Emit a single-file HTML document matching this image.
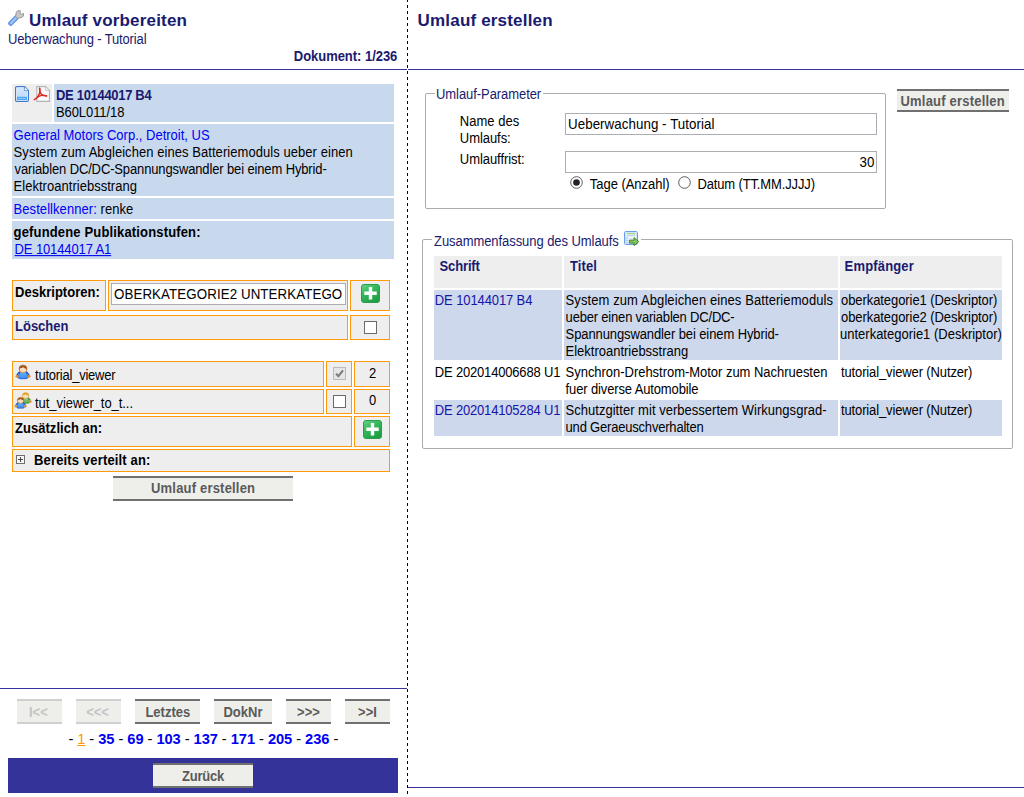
<!DOCTYPE html>
<html><head><meta charset="utf-8"><title>Umlauf</title>
<style>
*{box-sizing:border-box}
html,body{margin:0;padding:0;background:#fff}
body{width:1024px;height:797px;position:relative;overflow:hidden;font-family:"Liberation Sans",sans-serif;font-size:13px;line-height:17px;color:#000}
div,svg{position:absolute}
.t{white-space:nowrap;transform:scaleY(1.075);transform-origin:0 13px}
.b{font-weight:bold}
.navy{color:#1a1a6e}
.blue{color:#0000f5}
.lb{background:#c9d9ed}
.gr{background:#eeeeee}
.oc{background:#eeeeee;border:1px solid #ff9a0c}
.hl{height:1px;background:#333399}
.btn{background:#eeeeea;border-top:2px solid #707070;border-bottom:2px solid #707070}
.btn.dis{border-color:#d0d0d0}
.bt{color:#5a5a5a;font-weight:bold}
.bt.dis{color:#c4c4c4}
.cb{width:13px;height:13px;border:1px solid #6a6a6a;background:#fff}
.inp{border:1px solid #abadb3;background:#fff}
.fs{border:1px solid #ababab;border-radius:2px}
.leg{background:#fff}
.sb{background:#cdd8ec}
</style></head><body>

<div style="left:407px;top:0;width:1px;height:797px;background:linear-gradient(#000 50%,rgba(0,0,0,0) 50%) 0 -1px/1px 6px repeat-y"></div>
<svg style="left:8px;top:10px" width="16" height="16" viewBox="0 0 16 16"><path d="M2.7 13.3 L8 8" stroke="#5f93e2" stroke-width="5" stroke-linecap="round"/><path d="M2.9 13.1 L7.8 8.2" stroke="#9cc0f1" stroke-width="2.6" stroke-linecap="round"/><path d="M7.6 6.4 L8.3 2.2 Q9 0.4 11.6 0.4 L12.4 0.8 L11.9 3.2 L13.4 4.3 L15.7 3.4 Q16.2 6.2 13.8 7.6 L10.4 8 L9.6 8.9 Z" fill="#c8c8c8" stroke="#8e8e8e" stroke-width="0.9" stroke-linejoin="round"/></svg>
<div id="t0" class="t b navy" style="left:29.00px;top:11.0px;font-size:17px;line-height:20px;transform-origin:0 16px;transform:scaleY(1.0);letter-spacing:0.176px;">Umlauf vorbereiten</div>
<div id="t1" class="t navy" style="left:8.00px;top:31.0px;letter-spacing:-0.141px;">Ueberwachung - Tutorial</div>
<div id="t2" class="t b navy" style="left:293.80px;top:48.0px;letter-spacing:-0.036px;">Dokument: 1/236</div>
<div class="hl" style="left:0px;top:69px;width:407px;height:1px;"></div>
<div class="gr" style="left:12px;top:84px;width:40px;height:38px;"></div>
<div class="lb" style="left:54px;top:84px;width:340px;height:38px;"></div>
<div class="lb" style="left:12px;top:124px;width:382px;height:72px;"></div>
<div class="lb" style="left:12px;top:198px;width:382px;height:21px;"></div>
<div class="lb" style="left:12px;top:221px;width:382px;height:38px;"></div>
<svg style="left:15px;top:86px" width="14" height="16" viewBox="0 0 14 16"><defs><linearGradient id="dg" x1="0" y1="0" x2="0" y2="1"><stop offset="0" stop-color="#d6e7fb"/><stop offset="1" stop-color="#b9d6f8"/></linearGradient></defs><path d="M1.8 0.6 H9.6 L13.4 4.4 V14.2 Q13.4 15.4 12.2 15.4 H1.8 Q0.6 15.4 0.6 14.2 V1.8 Q0.6 0.6 1.8 0.6 Z" fill="#fff" stroke="#3f78cf" stroke-width="1.2"/><path d="M2 2 H9 V5 H12 V14 H2 Z" fill="url(#dg)"/><path d="M9.4 0.8 V4.6 H13.2" fill="#f2f7fe" stroke="#5a8fdc" stroke-width="0.9"/><rect x="2" y="10.8" width="10" height="3.2" fill="#4ba6f6"/><rect x="3" y="12" width="8" height="0.9" fill="#8ccafb"/></svg>
<svg style="left:33px;top:86px" width="18" height="16" viewBox="0 0 18 16"><path d="M3.8 0.6 H12.6 L16.4 4.4 V15.4 H3.8 Z" fill="#fcfcfc" stroke="#b3b3b3" stroke-width="1.1"/><path d="M12.4 0.8 V4.6 H16.2" fill="#efefef" stroke="#c4c4c4" stroke-width="0.8"/><path d="M1.2 13.6 C3.6 12.6 5.8 9.6 6.6 7 C7.2 5 7 3.2 6.6 2.2" fill="none" stroke="#dd2a26" stroke-width="1.5" stroke-linecap="round"/><path d="M6.6 2.4 C6.6 5 7.8 8 9.4 9 C10.6 9.6 12.4 9.8 13.6 9.9" fill="none" stroke="#dd2a26" stroke-width="1.5" stroke-linecap="round"/><path d="M13.6 9.9 C10.6 9 7.4 9.6 5.4 10.6" fill="none" stroke="#dd2a26" stroke-width="1.3" stroke-linecap="round"/></svg>
<div id="t3" class="t b navy" style="left:56.00px;top:87.0px;letter-spacing:-0.315px;">DE 10144017 B4</div>
<div id="t4" class="t " style="left:56.00px;top:104.0px;letter-spacing:-0.089px;">B60L011/18</div>
<div id="t5" class="t blue" style="left:13.60px;top:127.0px;letter-spacing:0.009px;">General Motors Corp., Detroit, US</div>
<div id="t6" class="t " style="left:13.60px;top:144.0px;letter-spacing:0.058px;">System zum Abgleichen eines Batteriemoduls ueber einen</div>
<div id="t7" class="t " style="left:14.60px;top:161.0px;letter-spacing:-0.133px;">variablen DC/DC-Spannungswandler bei einem Hybrid-</div>
<div id="t8" class="t " style="left:13.60px;top:178.0px;letter-spacing:0.025px;">Elektroantriebsstrang</div>
<div id="t9" class="t " style="left:13.60px;top:201.0px;letter-spacing:0.063px;"><span class="blue">Bestellkenner:</span> renke</div>
<div id="t10" class="t b" style="left:13.60px;top:224.0px;letter-spacing:0.156px;">gefundene Publikationstufen:</div>
<div id="t11" class="t blue" style="left:14.60px;top:241.0px;letter-spacing:-0.123px;text-decoration:underline;">DE 10144017 A1</div>
<div class="oc" style="left:12px;top:280px;width:94px;height:31px;"></div>
<div class="oc" style="left:108px;top:280px;width:240px;height:31px;"></div>
<div class="oc" style="left:350px;top:280px;width:40px;height:31px;"></div>
<div class="oc" style="left:12px;top:315px;width:336px;height:25px;"></div>
<div class="oc" style="left:350px;top:315px;width:40px;height:25px;"></div>
<div id="t12" class="t b" style="left:15.00px;top:284.0px;letter-spacing:0.021px;">Deskriptoren:</div>
<div class="inp" style="left:111px;top:283px;width:235px;height:22px;"></div>
<div id="t13" class="t " style="left:114.00px;top:286.0px;font-size:13.33px;transform:scaleY(1.05);letter-spacing:0.084px;">OBERKATEGORIE2 UNTERKATEGO</div>
<svg style="left:361px;top:284px" width="19" height="19" viewBox="0 0 19 19"><defs><linearGradient id="g1" x1="0" y1="0" x2="0.6" y2="1"><stop offset="0" stop-color="#6ad488"/><stop offset="0.45" stop-color="#36b85d"/><stop offset="1" stop-color="#1f9f46"/></linearGradient></defs><rect x="0.5" y="0.5" width="18" height="18" rx="2.5" fill="url(#g1)" stroke="#2a9d4c" stroke-width="1"/><path d="M7.8 3 h3.4 v4.5 h4.5 v3.4 h-4.5 v4.5 h-3.4 v-4.5 h-4.5 v-3.4 h4.5 z" fill="#fff"/></svg>
<div id="t14" class="t b navy" style="left:15.00px;top:318.0px;">Löschen</div>
<div class="cb" style="left:364px;top:321px;width:13px;height:13px;"></div>
<div class="oc" style="left:12px;top:361px;width:312px;height:26px;"></div>
<div class="oc" style="left:326px;top:361px;width:26px;height:26px;"></div>
<div class="oc" style="left:354px;top:361px;width:36px;height:26px;"></div>
<div class="oc" style="left:12px;top:389px;width:312px;height:25px;"></div>
<div class="oc" style="left:326px;top:389px;width:26px;height:25px;"></div>
<div class="oc" style="left:354px;top:389px;width:36px;height:25px;"></div>
<div class="oc" style="left:12px;top:416px;width:340px;height:31px;"></div>
<div class="oc" style="left:354px;top:416px;width:36px;height:31px;"></div>
<div class="oc" style="left:12px;top:449px;width:378px;height:23px;"></div>
<svg style="left:15px;top:364px" width="16" height="16" viewBox="0 0 16 16"><defs><linearGradient id="pg1" x1="0" y1="0" x2="0" y2="1"><stop offset="0" stop-color="#5cbaff"/><stop offset="1" stop-color="#3a88f0"/></linearGradient></defs><path d="M4.9 7.5 L1.9 11 M11.1 7.5 L14.1 11" stroke="#2156c6" stroke-width="1.4" fill="none"/><path d="M5.2 8 L10.8 8 L13 12.6 Q13.1 14.7 11 14.7 L5 14.7 Q2.9 14.7 3 12.6 Z" fill="url(#pg1)" stroke="#2156c6" stroke-width="0.8" stroke-linejoin="round"/><circle cx="2" cy="12.3" r="1.5" fill="#e48a2a"/><circle cx="14" cy="12.3" r="1.5" fill="#e48a2a"/><ellipse cx="8" cy="4.9" rx="3.9" ry="3.9" fill="#fbdcc0" stroke="#b8733a" stroke-width="0.7"/><path d="M3.9 5.4 A4.1 4.1 0 0 1 12.1 5.4 L11.5 6 L11.2 4.4 Q9.2 4.6 8.3 3.2 Q6.2 4.4 4.8 4.3 L4.5 6 Z" fill="#a2571c"/></svg>
<svg style="left:14px;top:391px" width="18" height="18" viewBox="0 0 18 18"><g transform="translate(5.2,0.6) scale(0.8)"><defs><linearGradient id="pg2" x1="0" y1="0" x2="0" y2="1"><stop offset="0" stop-color="#8ed27c"/><stop offset="1" stop-color="#55a848"/></linearGradient></defs><path d="M4.9 7.5 L1.9 11 M11.1 7.5 L14.1 11" stroke="#3a8a34" stroke-width="1.4" fill="none"/><path d="M5.2 8 L10.8 8 L13 12.6 Q13.1 14.7 11 14.7 L5 14.7 Q2.9 14.7 3 12.6 Z" fill="url(#pg2)" stroke="#3a8a34" stroke-width="0.8" stroke-linejoin="round"/><circle cx="2" cy="12.3" r="1.5" fill="#e48a2a"/><circle cx="14" cy="12.3" r="1.5" fill="#e48a2a"/><ellipse cx="8" cy="4.9" rx="3.9" ry="3.9" fill="#fbdcc0" stroke="#d9a03a" stroke-width="0.7"/><path d="M3.9 5.4 A4.1 4.1 0 0 1 12.1 5.4 L11.5 6 L11.2 4.4 Q9.2 4.6 8.3 3.2 Q6.2 4.4 4.8 4.3 L4.5 6 Z" fill="#e0a528"/></g><g transform="translate(0.2,5.4) scale(0.8)"><defs><linearGradient id="pg3" x1="0" y1="0" x2="0" y2="1"><stop offset="0" stop-color="#5cbaff"/><stop offset="1" stop-color="#3a88f0"/></linearGradient></defs><path d="M4.9 7.5 L1.9 11 M11.1 7.5 L14.1 11" stroke="#2156c6" stroke-width="1.4" fill="none"/><path d="M5.2 8 L10.8 8 L13 12.6 Q13.1 14.7 11 14.7 L5 14.7 Q2.9 14.7 3 12.6 Z" fill="url(#pg3)" stroke="#2156c6" stroke-width="0.8" stroke-linejoin="round"/><circle cx="2" cy="12.3" r="1.5" fill="#e48a2a"/><circle cx="14" cy="12.3" r="1.5" fill="#e48a2a"/><ellipse cx="8" cy="4.9" rx="3.9" ry="3.9" fill="#fbdcc0" stroke="#b8733a" stroke-width="0.7"/><path d="M3.9 5.4 A4.1 4.1 0 0 1 12.1 5.4 L11.5 6 L11.2 4.4 Q9.2 4.6 8.3 3.2 Q6.2 4.4 4.8 4.3 L4.5 6 Z" fill="#a2571c"/></g></svg>
<div id="t15" class="t " style="left:35.00px;top:367.0px;letter-spacing:-0.232px;">tutorial_viewer</div>
<div id="t16" class="t " style="left:35.00px;top:395.0px;letter-spacing:-0.059px;">tut_viewer_to_t...</div>
<div id="t17" class="t " style="left:369.00px;top:365.0px;">2</div>
<div id="t18" class="t " style="left:369.00px;top:392.0px;">0</div>
<div class="cb" style="left:333px;top:367px;width:13px;height:13px;border-color:#bcbcbc;background:#e5e5e5;"></div>
<svg style="left:335px;top:369px" width="9" height="9" viewBox="0 0 9 9"><path d="M1 4.6 L3.4 7.2 L8 1.4" fill="none" stroke="#7c7c7c" stroke-width="2"/></svg>
<div class="cb" style="left:333px;top:395px;width:13px;height:13px;"></div>
<div id="t19" class="t b" style="left:15.00px;top:420.0px;letter-spacing:0.038px;">Zusätzlich an:</div>
<svg style="left:363px;top:420px" width="19" height="19" viewBox="0 0 19 19"><defs><linearGradient id="g2" x1="0" y1="0" x2="0.6" y2="1"><stop offset="0" stop-color="#6ad488"/><stop offset="0.45" stop-color="#36b85d"/><stop offset="1" stop-color="#1f9f46"/></linearGradient></defs><rect x="0.5" y="0.5" width="18" height="18" rx="2.5" fill="url(#g2)" stroke="#2a9d4c" stroke-width="1"/><path d="M7.8 3 h3.4 v4.5 h4.5 v3.4 h-4.5 v4.5 h-3.4 v-4.5 h-4.5 v-3.4 h4.5 z" fill="#fff"/></svg>
<svg style="left:16px;top:455px" width="9" height="9" viewBox="0 0 9 9"><rect x="0.5" y="0.5" width="8" height="8" fill="#f6f6f6" stroke="#6e6e6e"/><path d="M2 4.5 h5 M4.5 2 v5" stroke="#4a4a4a" stroke-width="1"/></svg>
<div id="t20" class="t b" style="left:34.00px;top:452.0px;letter-spacing:0.158px;">Bereits verteilt an:</div>
<div class="btn" style="left:113px;top:476px;width:180px;height:25px;"></div>
<div id="t21" class="t bt" style="left:151.00px;top:480.0px;letter-spacing:0.193px;">Umlauf erstellen</div>
<div class="hl" style="left:0px;top:688px;width:407px;height:1px;"></div>
<div class="btn dis" style="left:17px;top:699px;width:45px;height:25px;"></div>
<div id="t22" class="t bt dis" style="left:29.00px;top:704.0px;">I&lt;&lt;</div>
<div class="btn dis" style="left:76px;top:699px;width:45px;height:25px;"></div>
<div id="t23" class="t bt dis" style="left:86.20px;top:704.0px;">&lt;&lt;&lt;</div>
<div class="btn" style="left:135px;top:699px;width:65px;height:25px;"></div>
<div id="t24" class="t bt" style="left:145.40px;top:704.0px;">Letztes</div>
<div class="btn" style="left:214px;top:699px;width:58px;height:25px;"></div>
<div class="t bt" style="left:214px;width:58px;text-align:center;top:704px">DokNr</div>
<div class="btn" style="left:286px;top:699px;width:45px;height:25px;"></div>
<div class="t bt" style="left:286px;width:45px;text-align:center;top:704px">&gt;&gt;&gt;</div>
<div class="btn" style="left:345px;top:699px;width:45px;height:25px;"></div>
<div class="t bt" style="left:345px;width:45px;text-align:center;top:704px">&gt;&gt;I</div>
<div id="t25" class="t " style="left:68.40px;top:730.7px;font-size:14.67px;transform-origin:0 13.3px;transform:scaleY(1.03);letter-spacing:-0.055px;">- <span style="color:#ff9a00;text-decoration:underline">1</span> - <b class="blue">35</b> - <b class="blue">69</b> - <b class="blue">103</b> - <b class="blue">137</b> - <b class="blue">171</b> - <b class="blue">205</b> - <b class="blue">236</b> -</div>
<div class="" style="left:8px;top:758px;width:390px;height:35px;background:#333399;"></div>
<div class="btn" style="left:153px;top:763px;width:100px;height:25px;"></div>
<div id="t26" class="t bt" style="left:182.00px;top:768.0px;letter-spacing:-0.200px;">Zurück</div>
<div id="t27" class="t b navy" style="left:417.60px;top:11.0px;font-size:17px;line-height:20px;transform-origin:0 16px;transform:scaleY(1.0);letter-spacing:0.180px;">Umlauf erstellen</div>
<div class="hl" style="left:408px;top:69px;width:616px;height:1px;"></div>
<div class="hl" style="left:408px;top:787px;width:616px;height:1px;"></div>
<div class="fs" style="left:425px;top:93px;width:461px;height:116px;"></div>
<div class="leg" style="left:435px;top:86px;width:108px;height:14px;"></div>
<div id="t28" class="t navy" style="left:436.00px;top:86.0px;letter-spacing:-0.067px;">Umlauf-Parameter</div>
<div id="t29" class="t " style="left:459.80px;top:113.0px;letter-spacing:0.014px;">Name des</div>
<div id="t30" class="t " style="left:459.80px;top:130.0px;letter-spacing:-0.057px;">Umlaufs:</div>
<div id="t31" class="t " style="left:459.80px;top:151.0px;letter-spacing:-0.055px;">Umlauffrist:</div>
<div class="inp" style="left:565px;top:113px;width:312px;height:22px;"></div>
<div id="t32" class="t " style="left:568.00px;top:116.0px;font-size:13.33px;transform:scaleY(1.05);letter-spacing:0.059px;">Ueberwachung - Tutorial</div>
<div class="inp" style="left:565px;top:151px;width:312px;height:22px;"></div>
<div id="t33" class="t " style="left:859.60px;top:154.0px;font-size:13.33px;transform:scaleY(1.05);">30</div>
<svg style="left:570px;top:176px" width="13" height="13" viewBox="0 0 13 13"><circle cx="6.5" cy="6.5" r="5.8" fill="#fff" stroke="#5c5c5c" stroke-width="1"/><circle cx="6.5" cy="6.5" r="3.3" fill="#222"/></svg>
<div id="t34" class="t " style="left:589.80px;top:176.0px;letter-spacing:-0.033px;">Tage (Anzahl)</div>
<svg style="left:678px;top:176px" width="13" height="13" viewBox="0 0 13 13"><circle cx="6.5" cy="6.5" r="5.8" fill="#fff" stroke="#5c5c5c" stroke-width="1"/></svg>
<div id="t35" class="t " style="left:697.40px;top:176.0px;letter-spacing:-0.135px;">Datum (TT.MM.JJJJ)</div>
<div class="btn" style="left:897px;top:89px;width:112px;height:23px;"></div>
<div id="t36" class="t bt" style="left:900.50px;top:93.0px;letter-spacing:0.200px;">Umlauf erstellen</div>
<div class="fs" style="left:422px;top:239px;width:591px;height:210px;"></div>
<div class="leg" style="left:432px;top:230px;width:209px;height:18px;"></div>
<div id="t37" class="t navy" style="left:434.00px;top:233.0px;letter-spacing:-0.062px;">Zusammenfassung des Umlaufs</div>
<svg style="left:624px;top:231px" width="16" height="16" viewBox="0 0 16 16"><rect x="0.5" y="0.5" width="13" height="13" rx="1.2" fill="#fff" stroke="#6b9de2"/><rect x="1.5" y="1.5" width="11" height="11" fill="none" stroke="#d3e3f9"/><path d="M2.5 2.8 H11.5" stroke="#86c873" stroke-width="1.1"/><path d="M2.5 4.8 H11.5" stroke="#a6c5ef" stroke-width="1"/><rect x="2" y="5.6" width="2.2" height="6.6" fill="#b4cef3"/><path d="M4.5 7.6 H11.5 M4.5 9.6 H11.5" stroke="#d3e3f9" stroke-width="1"/><path d="M2.6 6.6 h1 M2.6 8.6 h1 M2.6 10.6 h1" stroke="#fff" stroke-width="1"/><path d="M5.4 9.1 H10 V6.6 L14.8 10.6 L10 14.6 V12.1 H5.4 Z" fill="#84c067" stroke="#3c8d20" stroke-width="1" stroke-linejoin="round"/></svg>
<div class="gr" style="left:434px;top:256px;width:128px;height:32px;"></div>
<div class="gr" style="left:564px;top:256px;width:274px;height:32px;"></div>
<div class="gr" style="left:840px;top:256px;width:162px;height:32px;"></div>
<div class="sb" style="left:434px;top:290px;width:128px;height:70px;"></div>
<div class="sb" style="left:564px;top:290px;width:274px;height:70px;"></div>
<div class="sb" style="left:840px;top:290px;width:162px;height:70px;"></div>
<div class="sb" style="left:434px;top:400px;width:128px;height:36px;"></div>
<div class="sb" style="left:564px;top:400px;width:274px;height:36px;"></div>
<div class="sb" style="left:840px;top:400px;width:162px;height:36px;"></div>
<div id="t38" class="t b navy" style="left:439.60px;top:258.0px;letter-spacing:-0.150px;">Schrift</div>
<div id="t39" class="t b navy" style="left:570.00px;top:258.0px;letter-spacing:0.100px;">Titel</div>
<div id="t40" class="t b navy" style="left:844.60px;top:258.0px;letter-spacing:0.163px;">Empfänger</div>
<div id="t41" class="t " style="left:434.80px;top:292.0px;letter-spacing:-0.108px;color:#1515a8;">DE 10144017 B4</div>
<div id="t42" class="t " style="left:565.60px;top:292.0px;letter-spacing:0.090px;">System zum Abgleichen eines Batteriemoduls</div>
<div id="t43" class="t " style="left:565.60px;top:309.0px;letter-spacing:-0.189px;">ueber einen variablen DC/DC-</div>
<div id="t44" class="t " style="left:565.60px;top:326.0px;letter-spacing:-0.106px;">Spannungswandler bei einem Hybrid-</div>
<div id="t45" class="t " style="left:565.60px;top:343.0px;letter-spacing:-0.015px;">Elektroantriebsstrang</div>
<div id="t46" class="t " style="left:841.00px;top:292.0px;letter-spacing:-0.073px;">oberkategorie1 (Deskriptor)</div>
<div id="t47" class="t " style="left:841.00px;top:309.0px;letter-spacing:-0.073px;">oberkategorie2 (Deskriptor)</div>
<div id="t48" class="t " style="left:840.00px;top:326.0px;">unterkategorie1 (Deskriptor)</div>
<div id="t49" class="t " style="left:434.80px;top:364.0px;letter-spacing:-0.182px;">DE 202014006688 U1</div>
<div id="t50" class="t " style="left:565.60px;top:364.0px;letter-spacing:-0.031px;">Synchron-Drehstrom-Motor zum Nachruesten</div>
<div id="t51" class="t " style="left:565.60px;top:381.0px;letter-spacing:-0.136px;">fuer diverse Automobile</div>
<div id="t52" class="t " style="left:841.00px;top:364.0px;letter-spacing:-0.130px;">tutorial_viewer (Nutzer)</div>
<div id="t53" class="t " style="left:434.80px;top:402.0px;letter-spacing:-0.182px;color:#1515a8;">DE 202014105284 U1</div>
<div id="t54" class="t " style="left:565.60px;top:402.0px;letter-spacing:0.021px;">Schutzgitter mit verbessertem Wirkungsgrad-</div>
<div id="t55" class="t " style="left:565.60px;top:419.0px;letter-spacing:-0.200px;">und Geraeuschverhalten</div>
<div id="t56" class="t " style="left:841.00px;top:402.0px;letter-spacing:-0.130px;">tutorial_viewer (Nutzer)</div>
</body></html>
